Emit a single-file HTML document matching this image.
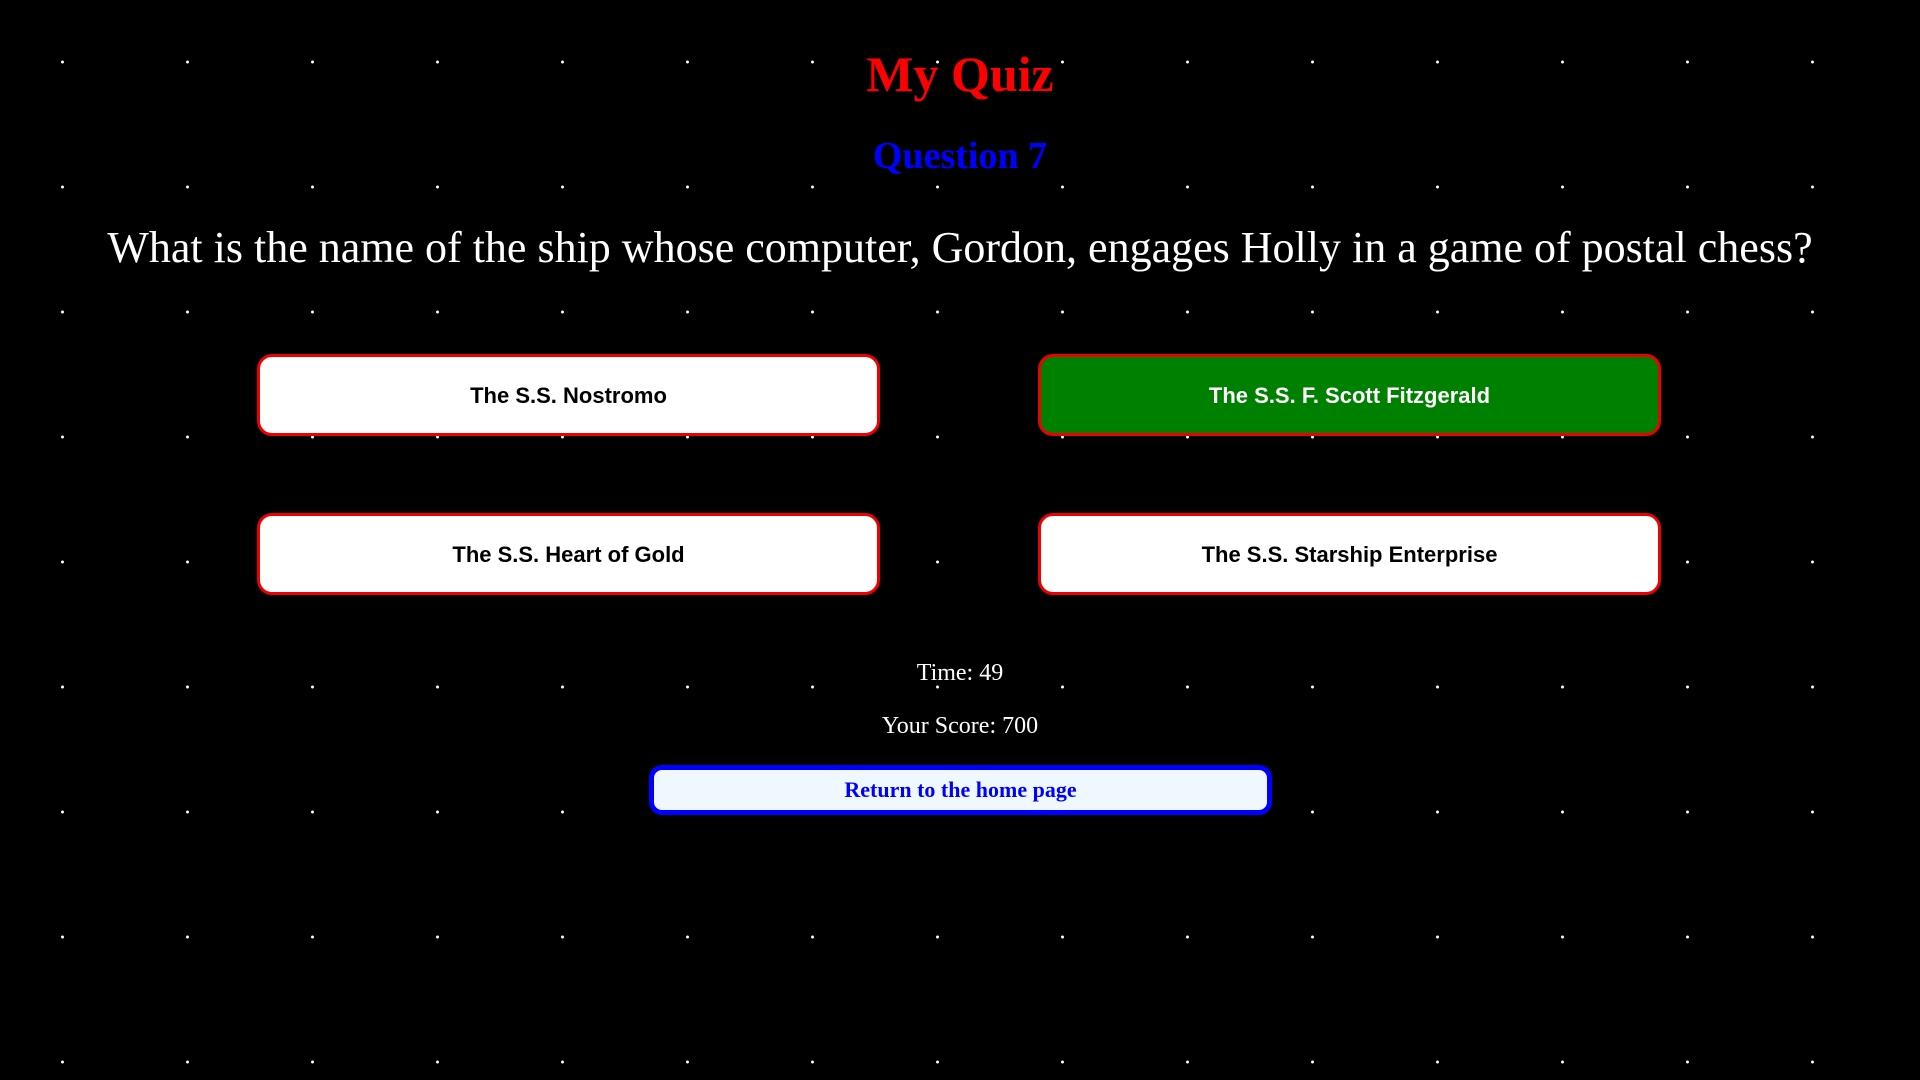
<!DOCTYPE html>
<html><head><meta charset="utf-8"><style>
html,body{margin:0;padding:0}
body{width:1920px;height:1080px;overflow:hidden;background-color:#000;
background-image:radial-gradient(circle at 62.5px 62px,#fff 0,#fff 1.2px,rgba(255,255,255,0) 1.8px);
background-size:125px 125px;position:relative;font-family:"Liberation Serif",serif;}
.c{position:absolute;left:0;width:1920px;text-align:center;white-space:nowrap}
h1{margin:0;color:#f00;font-size:50px;font-weight:bold;top:45px}
.q{color:#00f;font-weight:bold;font-size:38px;top:134px}
.t{color:#fff;font-size:44px;top:222px}
.b{position:absolute;width:617px;height:76px;border:3px solid #e00;border-radius:15px;background:#fff;
font-family:"Liberation Sans",sans-serif;font-weight:bold;font-size:22px;color:#000;display:flex;align-items:center;justify-content:center;box-sizing:content-box;padding-top:2px;height:74px}
.g{background:#008000;color:#fff}
.s{color:#fff;font-size:24px}
.r{position:absolute;left:649px;top:765px;width:613px;height:40px;border:5px solid #00f;border-radius:13px;background:#f0f8ff;color:#00f;font-weight:bold;font-size:22px;display:flex;align-items:center;justify-content:center}
</style></head><body>
<h1 class="c">My Quiz</h1>
<div class="c q">Question 7</div>
<div class="c t">What is the name of the ship whose computer, Gordon, engages Holly in a game of postal chess?</div>
<div class="b" style="left:257px;top:354px">The S.S. Nostromo</div>
<div class="b g" style="left:1038px;top:354px">The S.S. F. Scott Fitzgerald</div>
<div class="b" style="left:257px;top:513px">The S.S. Heart of Gold</div>
<div class="b" style="left:1038px;top:513px">The S.S. Starship Enterprise</div>
<div class="c s" style="top:660px">Time: 49</div>
<div class="c s" style="top:713px">Your Score: 700</div>
<div class="r">Return to the home page</div>
</body></html>
